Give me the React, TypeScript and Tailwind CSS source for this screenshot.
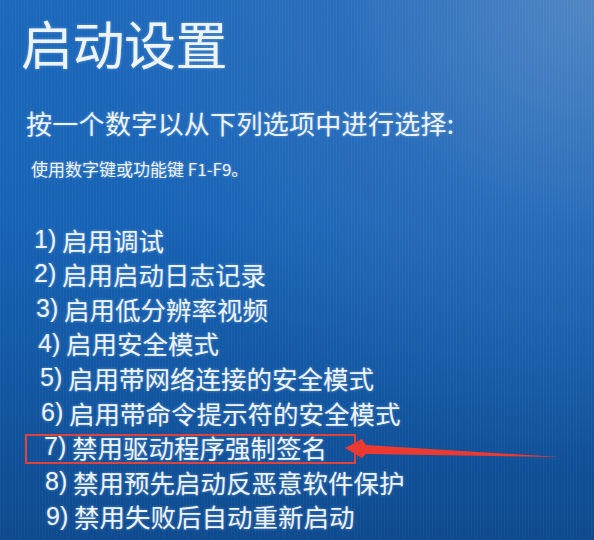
import React from "react";

const items: { n: string; t: string; cls: string }[] = [
  { n: "1)", t: "启用调试", cls: "ml-[13px]" },
  { n: "2)", t: "启用启动日志记录", cls: "ml-[13px]" },
  { n: "3)", t: "启用低分辨率视频", cls: "ml-[15px]" },
  { n: "4)", t: "启用安全模式", cls: "ml-[17px]" },
  { n: "5)", t: "启用带网络连接的安全模式", cls: "ml-[19px]" },
  { n: "6)", t: "启用带命令提示符的安全模式", cls: "ml-[20px]" },
  { n: "7)", t: "禁用驱动程序强制签名", cls: "ml-[23px]" },
  { n: "8)", t: "禁用预先启动反恶意软件保护", cls: "ml-[24px]" },
  { n: "9)", t: "禁用失败后自动重新启动", cls: "ml-[25px]" },
];

export default function App() {
  return (
    <div
      className="relative w-[594px] h-[540px] overflow-hidden text-[#eef4fb] bg-[radial-gradient(ellipse_at_100%_0%,#5187c4_0%,rgba(60,120,190,0.45)_30%,transparent_60%),linear-gradient(180deg,#1c68bb_0%,#1763b6_40%,#11559f_75%,#0e4a8f_100%)]"
      style={{ fontFamily: '"Noto Sans CJK SC", "Noto Sans", sans-serif' }}
    >
      <div className="absolute inset-0 bg-[repeating-linear-gradient(90deg,rgba(255,255,255,0.03)_0px,rgba(255,255,255,0.03)_1px,transparent_1px,transparent_3px)]" />
      <div className="relative flex flex-col pl-[21px] pt-[17px] [text-shadow:0_0_3px_rgba(200,225,255,0.45)]">
        <div className="text-[52px] leading-[52px] tracking-[-0.5px]">启动设置</div>
        <div className="mt-[39px] ml-[5px] text-[26px] leading-[30px] tracking-[0.3px]">按一个数字以从下列选项中进行选择:</div>
        <div className="mt-[20px] ml-[10px] text-[17px] leading-[22px]">使用数字键或功能键 F1-F9。</div>
        <div className="mt-[42px] flex flex-col text-[25.5px]">
          {items.map((it) => (
            <div key={it.n} className={"h-[34.6px] flex items-center whitespace-pre leading-none " + it.cls}>
              <span className="font-['Liberation_Sans'] text-[25px] leading-none">{it.n}</span>
              <span className="leading-none"> {it.t}</span>
            </div>
          ))}
        </div>
      </div>
      <div className="absolute left-[25px] top-[434px] w-[331px] h-[30px] border-2 border-[#e0413b]" />
      <svg className="absolute left-0 top-0" width="594" height="540" viewBox="0 0 594 540">
        <polygon
          points="345,448 362,439 366,445 560,457 366,454 362,458"
          fill="#ec3a33"
        />
      </svg>
    </div>
  );
}
